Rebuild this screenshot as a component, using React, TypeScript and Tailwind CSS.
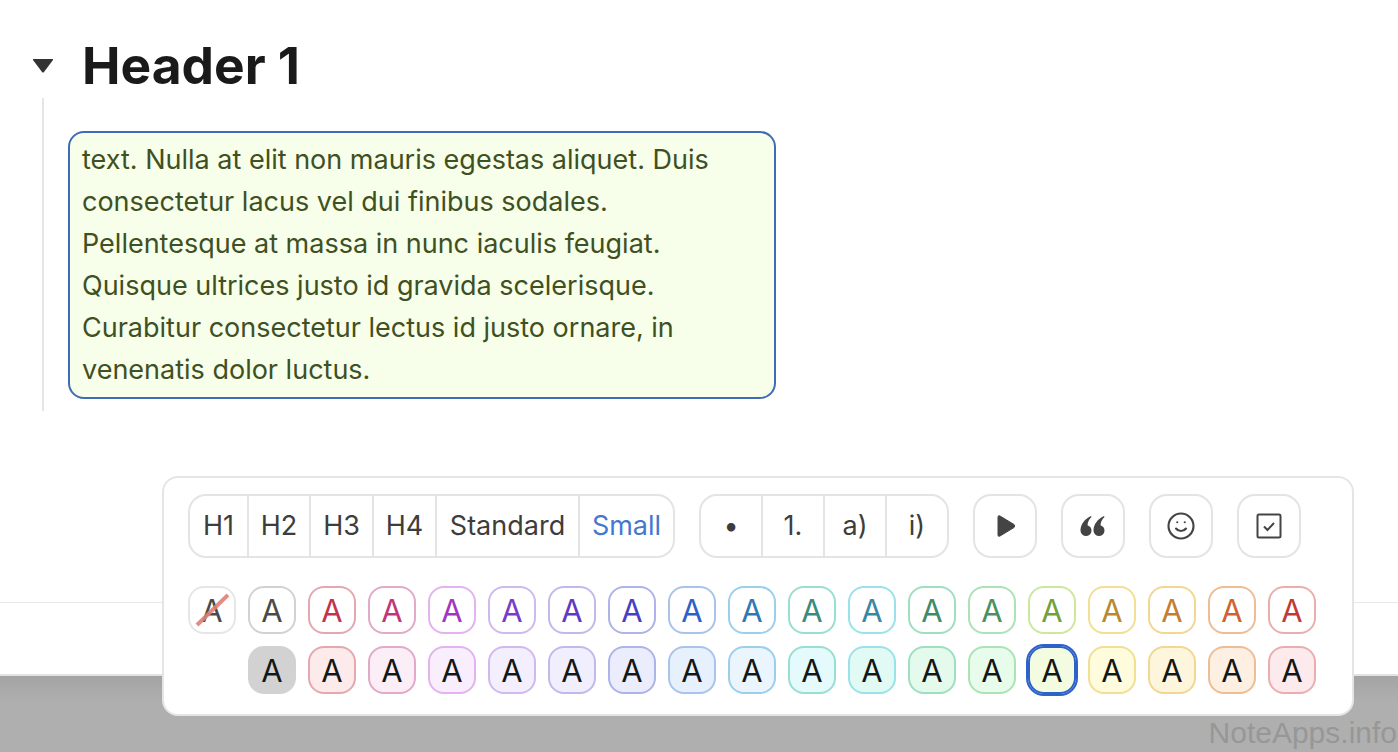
import { Smile } from 'lucide-react';

const headings = [
  { label: 'H1', width: 'w-[59px]' },
  { label: 'H2', width: 'w-[62px]' },
  { label: 'H3', width: 'w-[63px]' },
  { label: 'H4', width: 'w-[63px]' },
  { label: 'Standard', width: 'w-[143px]' },
];

const lists = [
  { label: '•', width: 'w-[62px]' },
  { label: '1.', width: 'w-[62px]' },
  { label: 'a)', width: 'w-[62px]' },
  { label: 'i)', width: 'w-[60px]' },
];

const textColors = [
  'border-[#d2d2d2] text-[#4a4a46]',
  'border-[#e5a8b0] text-[#c2334d]',
  'border-[#e3a9c8] text-[#c2357a]',
  'border-[#e2b3ef] text-[#a236c0]',
  'border-[#d1b9ef] text-[#7a3bc9]',
  'border-[#c1b9eb] text-[#6238c4]',
  'border-[#aeb3e9] text-[#4a3fc4]',
  'border-[#a8c4ea] text-[#2f5fc8]',
  'border-[#9dcfeb] text-[#2f78b4]',
  'border-[#98dfcf] text-[#3a8a7e]',
  'border-[#9ae2eb] text-[#3a86a6]',
  'border-[#9edfc1] text-[#3f8a68]',
  'border-[#aae3b5] text-[#4a9060]',
  'border-[#cbe89d] text-[#74a03a]',
  'border-[#f2df93] text-[#b88a30]',
  'border-[#f2d793] text-[#c47e30]',
  'border-[#edbe95] text-[#cf6430]',
  'border-[#ebaeae] text-[#c23a34]',
];

const fillColors = [
  'border-[#d2d2d2] bg-[#d2d2d2]',
  'border-[#e5a8b0] bg-[#fdeaeb]',
  'border-[#e3a9c8] bg-[#fbeef6]',
  'border-[#e2b3ef] bg-[#f9eefd]',
  'border-[#d1b9ef] bg-[#f4effe]',
  'border-[#c1b9eb] bg-[#f1effe]',
  'border-[#aeb3e9] bg-[#ebedfc]',
  'border-[#a8c4ea] bg-[#e7f0fd]',
  'border-[#9dcfeb] bg-[#eaf5fe]',
  'border-[#98dfcf] bg-[#e4fafd]',
  'border-[#9ae2eb] bg-[#e2faf4]',
  'border-[#9edfc1] bg-[#e4faec]',
  'border-[#aae3b5] bg-[#e8fcec]',
  'border-[#2f62c9] bg-[#f3fce0] outline-2 outline-[#2f62c9]',
  'border-[#f2df93] bg-[#fefcdc]',
  'border-[#f2d793] bg-[#fdf6dc]',
  'border-[#edbe95] bg-[#fdf0e3]',
  'border-[#ebaeae] bg-[#fdeaec]',
];

function Swatch({ className }: { className: string }) {
  return (
    <div className={`w-12 h-12 rounded-2xl border-2 flex items-center justify-center text-[31px] leading-none shrink-0 ${className}`}>
      A
    </div>
  );
}

function IconButton({ children }: { children: React.ReactNode }) {
  return (
    <div className="w-16 h-16 rounded-[18px] border-2 border-[#e5e3e3] flex items-center justify-center text-[#444444]">
      {children}
    </div>
  );
}

export default function App() {
  return (
    <div className="relative h-[752px] flex flex-col overflow-hidden bg-white font-[Inter,sans-serif]">
      <main className="h-[602px] shrink-0">
        <div className="flex items-center pt-[34px] pl-[32px]">
          <svg width="22" height="15" viewBox="0 0 22 15" className="shrink-0">
            <path d="M1.5 1 H20.5 Q21.5 1 21 2 L12 14 Q11 15 10 14 L1 2 Q0.5 1 1.5 1 Z" fill="#333333" />
          </svg>
          <h1 className="ml-[28px] text-[51.5px] leading-[62px] font-bold text-[#1a1a1a]">Header 1</h1>
        </div>
        <div className="ml-[42px] mt-[2px] border-l-2 border-[#e5e5e5] pl-6 pt-[33px] pb-3">
          <div className="w-[708px] rounded-2xl border-2 border-[#3f6cb8] bg-[#f7fee9] pl-3 pr-10 py-[6px] text-[27px] leading-[42px] text-[#3f5022]">
            text. Nulla at elit non mauris egestas aliquet. Duis consectetur lacus vel dui finibus sodales. Pellentesque at massa in nunc iaculis feugiat. Quisque ultrices justo id gravida scelerisque. Curabitur consectetur lectus id justo ornare, in venenatis dolor luctus.
          </div>
        </div>
      </main>

      <footer className="h-[74px] shrink-0 border-t border-[#e8e8e8] border-b-2 border-b-[#e2e2e2]" />
      <div className="flex-1 flex justify-end items-end bg-gradient-to-b from-[#a4a4a4] to-[#afafaf] to-[35%] pr-[1px] pb-[1px]">
        <span className="font-['Liberation_Sans',sans-serif] text-[30px] leading-[36px] text-[#979797]">NoteApps.info</span>
      </div>

      <div className="absolute left-[162px] top-[476px] w-[1192px] h-[240px] rounded-[16px] border-2 border-[#e5e5e5] bg-white pl-6 pt-4">
        <div className="flex gap-6 text-[27px] text-[#3d3d3d]">
          <div className="flex h-16 rounded-[18px] border-2 border-[#e5e3e3]">
            {headings.map((item) => (
              <div key={item.label} className={`${item.width} flex items-center justify-center border-r-2 border-[#e5e3e3]`}>
                {item.label}
              </div>
            ))}
            <div className="w-[93px] flex items-center justify-center text-[#4478d0]">Small</div>
          </div>
          <div className="flex h-16 rounded-[18px] border-2 border-[#e5e3e3]">
            {lists.map((item, i) => (
              <div key={item.label} className={`${item.width} flex items-center justify-center ${i < 3 ? 'border-r-2 border-[#e5e3e3]' : ''}`}>
                {item.label}
              </div>
            ))}
          </div>
          <IconButton>
            <svg width="20" height="24" viewBox="0 0 20 24" className="ml-[2px]">
              <path d="M2 3 Q2 1 4 2 L18 10.5 Q19.5 12 18 13.5 L4 22 Q2 23 2 21 Z" fill="#444444" stroke="#444444" strokeWidth="1" strokeLinejoin="round" />
            </svg>
          </IconButton>
          <IconButton>
            <svg width="26" height="22" viewBox="0 0 26 22" fill="#444444">
              <path d="M11 1 C4.5 4 .5 9.5 .5 15.5 A5.5 5.5 0 1 0 7.5 10.2 C7.8 7 9 4 11.5 2 Z" />
              <path d="M24 1 C17.5 4 13.5 9.5 13.5 15.5 A5.5 5.5 0 1 0 20.5 10.2 C20.8 7 22 4 24.5 2 Z" />
            </svg>
          </IconButton>
          <IconButton>
            <Smile size={30} strokeWidth={1.7} />
          </IconButton>
          <IconButton>
            <svg width="26" height="26" viewBox="0 0 26 26" fill="none" stroke="#444444">
              <rect x="1.5" y="1.5" width="23" height="23" rx="1.5" strokeWidth="2" />
              <path d="M8 13.5 L11.5 17 L18 10" strokeWidth="2" />
            </svg>
          </IconButton>
        </div>

        <div className="mt-7 flex gap-3">
          <div className="relative w-12 h-12 rounded-2xl border-2 border-[#e6e6e6] flex items-center justify-center text-[31px] leading-none text-[#4a4a46] shrink-0">
            A
            <svg width="34" height="34" viewBox="0 0 34 34" className="absolute left-[5px] top-[5px]">
              <path d="M2 32 L33 2" stroke="#e07f78" strokeWidth="4" opacity="0.9" />
            </svg>
          </div>
          {textColors.map((c) => (
            <Swatch key={c} className={c} />
          ))}
        </div>
        <div className="mt-3 flex gap-3 pl-[60px] text-[#161616]">
          {fillColors.map((c) => (
            <Swatch key={c} className={c} />
          ))}
        </div>
      </div>
    </div>
  );
}
